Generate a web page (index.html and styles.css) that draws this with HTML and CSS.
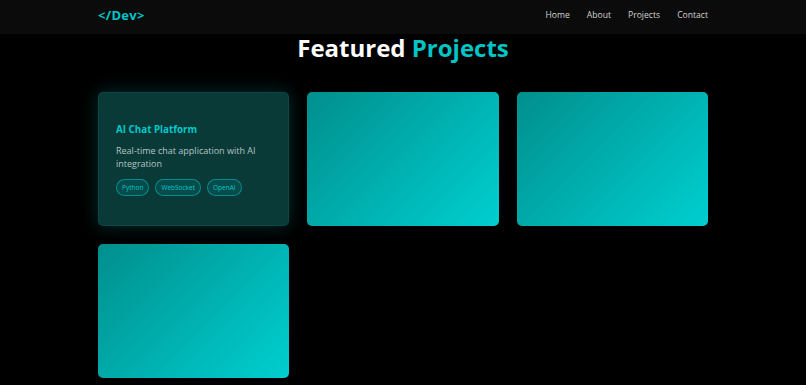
FILE: index.html
```html
<!DOCTYPE html>
<html lang="en">
<head>
    <meta charset="UTF-8">
    <meta name="viewport" content="width=device-width, initial-scale=1.0">
    <title>Featured Projects</title>
    <link rel="stylesheet" href="styles.css">
</head>
<body>
    <header class="navbar">
        <div class="nav-inner">
            <div class="logo">&lt;/Dev&gt;</div>
            <nav class="nav-links">
                <a href="#">Home</a>
                <a href="#">About</a>
                <a href="#">Projects</a>
                <a href="#">Contact</a>
            </nav>
        </div>
    </header>

    <section class="projects">
        <h2 class="section-title">Featured <span>Projects</span></h2>

        <div class="project-grid">
            <div class="project-card active">
                <div class="project-info">
                    <h3>AI Chat Platform</h3>
                    <p>Real-time chat application with AI integration</p>
                    <div class="tags">
                        <span class="tag">Python</span>
                        <span class="tag">WebSocket</span>
                        <span class="tag">OpenAI</span>
                    </div>
                </div>
            </div>
            <div class="project-card"></div>
            <div class="project-card"></div>
            <div class="project-card"></div>
        </div>
    </section>
</body>
</html>
```

FILE: styles.css
```css
* {
    box-sizing: border-box;
    margin: 0;
    padding: 0;
    font-family: 'Open Sans', 'Noto Sans', sans-serif;
}

body {
    background-color: #000;
    color: #fff;
}

.navbar {
    background-color: #0b0b0b;
    height: 34px;
    padding-bottom: 5px;
}

.nav-inner {
    width: 610px;
    margin: 0 auto;
    height: 100%;
    display: flex;
    justify-content: space-between;
    align-items: center;
}

.logo {
    color: #00c4c6;
    font-size: 13px;
    font-weight: 700;
    letter-spacing: 0.3px;
}

.nav-links {
    display: flex;
    gap: 17px;
}

.nav-links a {
    color: #d2d2d2;
    text-decoration: none;
    font-size: 8.6px;
}

.projects {
    width: 610px;
    margin: 0 auto;
}

.section-title {
    text-align: center;
    font-size: 24px;
    font-weight: 700;
    line-height: 28px;
    margin-bottom: 30px;
}

.section-title span {
    color: #00c4c6;
}

.project-grid {
    display: grid;
    grid-template-columns: repeat(3, 1fr);
    gap: 18px;
}

.project-card {
    height: 134px;
    border-radius: 5px;
    background: linear-gradient(135deg, #008f8d, #00cfd0);
}

.project-card.active {
    background: #093a38;
    border: 1px solid rgba(0, 206, 209, 0.1);
    box-shadow: 0 0 18px rgba(0, 206, 209, 0.22);
    display: flex;
    align-items: center;
    padding: 0 17px;
}

.project-info h3 {
    color: #00c8ca;
    font-size: 9.8px;
    font-weight: 700;
    margin-bottom: 8px;
    margin-top: 1px;
}

.project-info p {
    color: #b5c4c3;
    font-size: 9px;
    line-height: 13px;
    margin-bottom: 9px;
}

.tags {
    display: flex;
    gap: 6px;
}

.tag {
    font-size: 6.5px;
    color: #00c8ca;
    border: 1px solid rgba(0, 206, 209, 0.5);
    background-color: rgba(0, 206, 209, 0.12);
    border-radius: 10px;
    padding: 3px 5px;
}
```
